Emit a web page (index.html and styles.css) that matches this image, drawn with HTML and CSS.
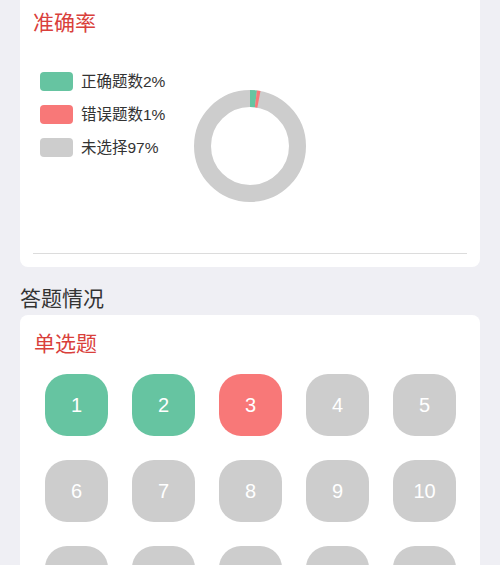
FILE: index.html
```html
<!DOCTYPE html>
<html lang="zh-CN">
<head>
<meta charset="utf-8">
<title>答题情况</title>
<link rel="stylesheet" href="styles.css">
</head>
<body>
<div class="page">
  <section class="card card-rate">
    <h2 class="card-title">准确率</h2>
    <div class="chart">
      <ul class="legend">
        <li class="legend-item"><span class="swatch swatch-right"></span>正确题数2%</li>
        <li class="legend-item"><span class="swatch swatch-wrong"></span>错误题数1%</li>
        <li class="legend-item"><span class="swatch swatch-none"></span>未选择97%</li>
      </ul>
      <svg class="donut" width="112" height="112" viewBox="0 0 112 112">
        <g transform="rotate(-90 56 56)">
          <circle cx="56" cy="56" r="47.5" fill="none" stroke="#cdcdcd" stroke-width="17"/>
          <circle cx="56" cy="56" r="47.5" fill="none" stroke="#66c4a1" stroke-width="17" stroke-dasharray="5.97 300"/>
          <circle cx="56" cy="56" r="47.5" fill="none" stroke="#f87878" stroke-width="17" stroke-dasharray="2.98 300" stroke-dashoffset="-5.97"/>
        </g>
      </svg>
    </div>
    <div class="divider"></div>
  </section>

  <h3 class="section-title">答题情况</h3>

  <section class="card card-answers">
    <h2 class="card-title">单选题</h2>
    <div class="grid">
      <div class="q q-right">1</div>
      <div class="q q-right">2</div>
      <div class="q q-wrong">3</div>
      <div class="q">4</div>
      <div class="q">5</div>
      <div class="q">6</div>
      <div class="q">7</div>
      <div class="q">8</div>
      <div class="q">9</div>
      <div class="q">10</div>
      <div class="q"></div>
      <div class="q"></div>
      <div class="q"></div>
      <div class="q"></div>
      <div class="q"></div>
    </div>
  </section>
</div>
</body>
</html>
```

FILE: styles.css
```css
* { box-sizing: border-box; }

html, body {
  margin: 0;
  padding: 0;
  background: #efeff4;
}

body {
  font-family: "Liberation Sans", "Noto Sans CJK SC", sans-serif;
  color: #333;
  overflow: hidden;
}

.page {
  padding: 0 20px;
  margin-top: -12px;
}

.card {
  background: #fff;
  border-radius: 8px;
}

.card-rate {
  padding: 20px 13px 13px;
}

.card-title {
  margin: 0;
  font-size: 21px;
  line-height: 30px;
  font-weight: normal;
  color: #d9403b;
  padding-left: 0;
}

.chart {
  display: grid;
  height: 215px;
  align-items: start;
}

.legend,
.donut {
  grid-area: 1 / 1;
}

.legend {
  list-style: none;
  margin: 34px 0 0 7px;
  padding: 0;
  justify-self: start;
  display: flex;
  flex-direction: column;
  gap: 14px;
}

.legend-item {
  display: flex;
  align-items: center;
  font-size: 15.5px;
  line-height: 19px;
  color: #333;
}

.swatch {
  width: 33px;
  height: 19px;
  border-radius: 4px;
  margin-right: 8px;
  flex: none;
}

.swatch-right { background: #66c4a1; }
.swatch-wrong { background: #f87878; }
.swatch-none { background: #cdcdcd; }

.donut {
  justify-self: center;
  margin-top: 52px;
  display: block;
}

.divider {
  height: 1px;
  background: #dcdcdc;
}

.section-title {
  margin: 0;
  padding: 16px 0 0 0;
  font-size: 21px;
  line-height: 32px;
  font-weight: normal;
  color: #333;
  height: 48px;
}

.card-answers {
  padding: 14px 14px 40px;
}

.grid {
  display: grid;
  grid-template-columns: repeat(5, 63px);
  grid-auto-rows: 62px;
  column-gap: 24px;
  row-gap: 24px;
  margin: 15px 0 0 11px;
}

.q {
  background: #cdcdcd;
  border-radius: 22px;
  color: #fff;
  font-size: 20px;
  display: flex;
  align-items: center;
  justify-content: center;
}

.q-right { background: #66c4a1; }
.q-wrong { background: #f87878; }
```
